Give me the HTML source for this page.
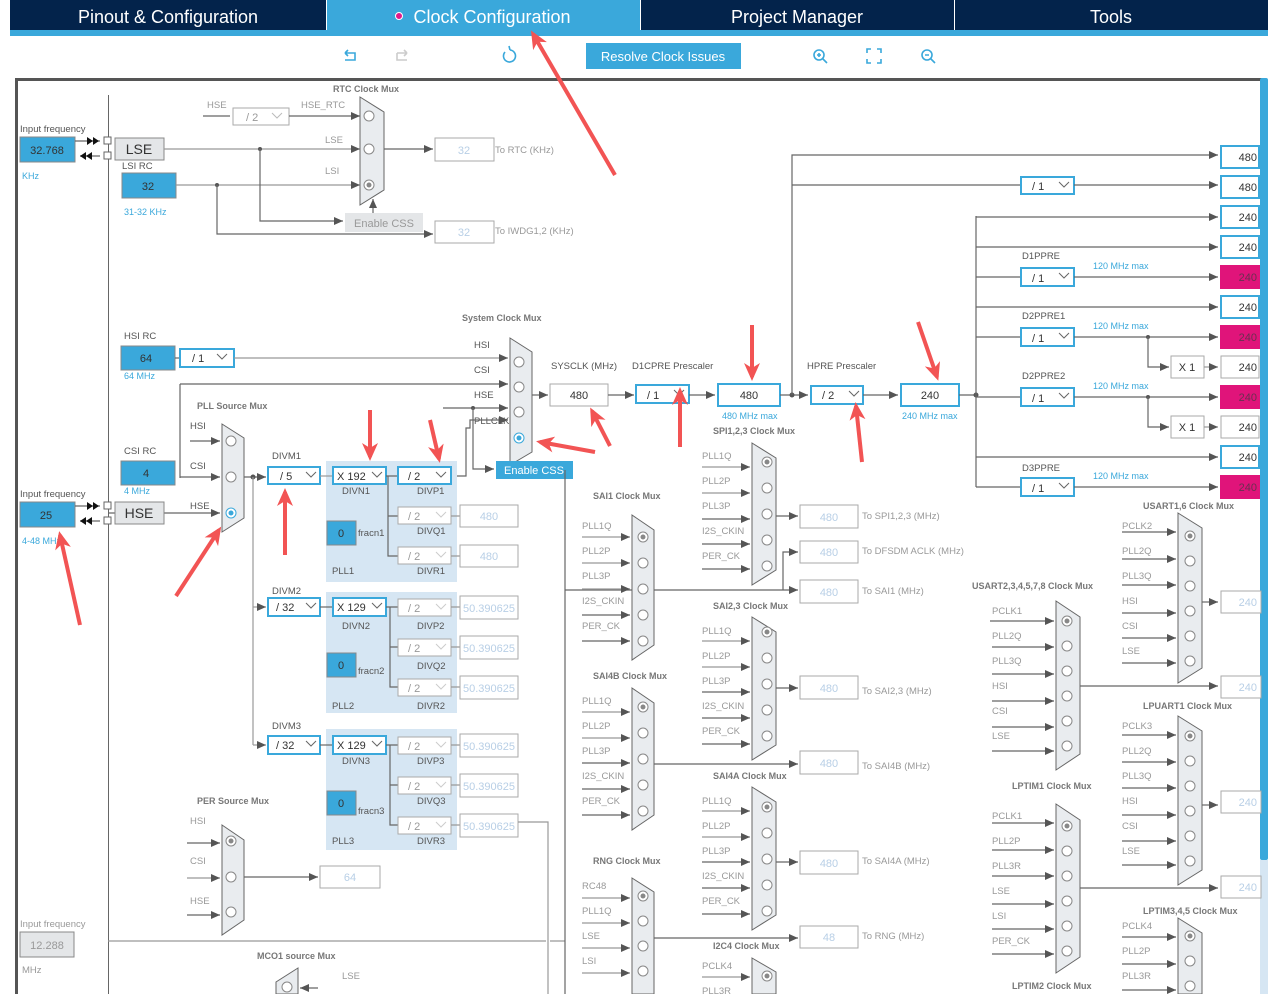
<!DOCTYPE html>
<html><head><meta charset="utf-8"><style>
body{margin:0;width:1270px;height:994px;overflow:hidden;background:#fff;font-family:"Liberation Sans",sans-serif}
svg{position:absolute;left:0;top:0}
.l{font-size:9.5px;fill:#555}
.g{font-size:9.5px;fill:#999}
.ti{font-size:9px;fill:#777;font-weight:bold}
.b{font-size:9px;fill:#3aa8db}
.ln{stroke:#666;fill:none;stroke-width:1.2}
.lg{stroke:#999;fill:none;stroke-width:1.2}
.dd{fill:#fff;stroke:#3aa8db;stroke-width:2}
.dx{fill:#fff;stroke:#aaa;stroke-width:1}
.ob{fill:#fff;stroke:#aaa;stroke-width:1}
.bb{fill:#3aa8db;stroke:#888;stroke-width:1}
.mx{fill:#e9ecef;stroke:#666;stroke-width:1}
.c{fill:#fff;stroke:#888;stroke-width:1}
.ra{stroke:#f25454;stroke-width:4;marker-end:url(#rh)}
.v{font-size:11px;fill:#333}
.vl{font-size:11px;fill:#b8cfe6}
.vd{font-size:11px;fill:#999}
.pk{font-size:11px;fill:#6a3050}
</style></head><body>
<svg width="1270" height="994" viewBox="0 0 1270 994">
<defs>
<marker id="a" markerWidth="9" markerHeight="8" refX="9" refY="4" orient="auto" markerUnits="userSpaceOnUse"><path d="M0,0L9,4L0,8z" fill="#555"/></marker>
<marker id="rh" markerWidth="24" markerHeight="24" refX="14" refY="8" orient="auto" markerUnits="userSpaceOnUse"><path d="M0,0L18,8L0,16L5,8z" fill="#f25454"/></marker>
</defs>
<rect x="10" y="0" width="1258" height="30" fill="#03234b"/>
<rect x="327" y="0" width="313" height="30" fill="#3aa8db"/>
<rect x="10" y="30" width="1258" height="6" fill="#3aa8db"/>
<line x1="326.5" y1="0" x2="326.5" y2="30" stroke="#fff"/>
<line x1="640.5" y1="0" x2="640.5" y2="30" stroke="#fff"/>
<line x1="954.5" y1="0" x2="954.5" y2="30" stroke="#fff"/>
<g font-size="18" fill="#fff" text-anchor="middle"><text x="168" y="23">Pinout &amp; Configuration</text><text x="492" y="23">Clock Configuration</text><text x="797" y="23">Project Manager</text><text x="1111" y="23">Tools</text></g>
<circle cx="399" cy="16" r="3.5" fill="#e0198a" stroke="#fff" stroke-width="1"/>
<g stroke="#3aa8db" stroke-width="1.6" fill="none">
<path d="M345,53h10v7h-10M345,53l3-3M345,53l3,3"/>
<path d="M397,53h10M407,53l-3-3M407,53l-3,3M397,53v7h10" stroke="#ccc"/>
<path d="M505,52a6,6 0 1 0 5,-2M510,50l-1,-4"/>
<circle cx="819" cy="55" r="5"/><path d="M823,59l4,4M817,55h4M819,53v4"/>
<path d="M867,53v-4h4M877,49h4v4M881,59v4h-4M871,63h-4v-4"/>
<circle cx="927" cy="55" r="5"/><path d="M931,59l4,4M925,55h4"/>
</g>
<rect x="586" y="43" width="155" height="26" fill="#3aa8db"/>
<text x="663" y="61" text-anchor="middle" font-size="13" fill="#fff">Resolve Clock Issues</text>
<path d="M16.5,994V79.5H1262" stroke="#555" stroke-width="3" fill="none"/>
<rect x="1260" y="78" width="8" height="782" fill="#3aa8db" rx="2"/>
<rect x="1260" y="860" width="8" height="134" fill="#d6e6f3"/>
<line x1="108.5" y1="95" x2="108.5" y2="994" stroke="#666"/>

<text class="l" x="20" y="132">Input frequency</text>
<rect class="bb" x="20" y="137" width="55" height="25"/><text class="v" x="47" y="154" text-anchor="middle">32.768</text>
<text class="b" x="22" y="179">KHz</text>
<path d="M75,141H100M100,156H80" class="ln"/><path d="M93,137l6,4l-6,4zM87,137l6,4l-6,4zM80,156l6,-4v8zM86,156l6,-4v8z" fill="#111"/>
<rect x="104" y="137" width="7" height="7" fill="#fff" stroke="#666"/><rect x="104" y="152" width="7" height="7" fill="#fff" stroke="#666"/>
<rect x="115" y="138" width="49" height="22" fill="#e4e6e8" stroke="#888"/><text x="139" y="154" text-anchor="middle" font-size="14" fill="#333">LSE</text>
<text class="l" x="122" y="169">LSI RC</text>
<rect class="bb" x="122" y="173" width="54" height="25"/><text class="v" x="148" y="190" text-anchor="middle">32</text>
<text class="b" x="124" y="215">31-32 KHz</text>
<text class="ti" x="333" y="92">RTC Clock Mux</text>
<text class="g" x="207" y="108">HSE</text><line x1="203" y1="116" x2="230" y2="116" class="ln"/>
<rect class="dx" x="233" y="108" width="56" height="17"/><text class="vd" x="246" y="121">/ 2</text><polyline points="272,113 277,118 282,113" fill="none" stroke="#bbb"/>
<text class="g" x="301" y="108">HSE_RTC</text>
<line x1="289" y1="116" x2="360" y2="116" class="ln" marker-end="url(#a)"/>
<path d="M164,149H360" class="lg" marker-end="url(#a)"/><path d="M176,185H360" class="lg" marker-end="url(#a)"/>
<text class="g" x="325" y="143">LSE</text><text class="g" x="325" y="174">LSI</text>
<circle cx="260" cy="149" r="2" fill="#555"/><circle cx="217" cy="185" r="2" fill="#555"/>
<path d="M260,149V221H343" class="ln" marker-end="url(#a)"/>
<path d="M217,185V234H433" class="ln" marker-end="url(#a)"/>
<polygon class="mx" points="360,97 384,112 384,190 360,205"/>
<circle class="c" cx="369" cy="116" r="5"/><circle class="c" cx="369" cy="149" r="5"/><circle class="c" cx="369" cy="185" r="5"/><circle cx="369" cy="185" r="2.5" fill="#888"/>
<rect x="345" y="213" width="78" height="19" fill="#e4e6e8"/><text x="384" y="227" text-anchor="middle" font-size="11" fill="#999">Enable CSS</text>
<line x1="373" y1="213" x2="373" y2="199" class="ln" marker-end="url(#a)"/>
<line x1="384" y1="149" x2="433" y2="149" class="ln" marker-end="url(#a)"/>
<rect class="ob" x="435" y="138" width="59" height="23"/><text class="vl" x="464" y="154" text-anchor="middle">32</text><text class="g" x="495" y="153">To RTC (KHz)</text>
<rect class="ob" x="435" y="221" width="59" height="22"/><text class="vl" x="464" y="236" text-anchor="middle">32</text><text class="g" x="495" y="234">To IWDG1,2 (KHz)</text>

<text class="l" x="124" y="339">HSI RC</text>
<rect class="bb" x="121" y="346" width="54" height="24"/><text class="v" x="146" y="362" text-anchor="middle">64</text>
<text class="b" x="124" y="379">64 MHz</text>
<line x1="175" y1="358" x2="180" y2="358" class="ln"/>
<rect class="dd" x="180" y="349" width="54" height="18"/><text class="v" x="192" y="362">/ 1</text><polyline points="217,354 222,359 227,354" fill="none" stroke="#666"/>
<line x1="234" y1="358" x2="508" y2="358" class="lg" marker-end="url(#a)"/>
<path d="M180,384H508" class="ln" marker-end="url(#a)"/>
<path d="M180,384V478" class="ln"/>
<text class="l" x="474" y="348">HSI</text><text class="l" x="474" y="373">CSI</text><text class="l" x="474" y="398">HSE</text><text class="l" x="474" y="424">PLLCLK</text>
<text class="l" x="124" y="454">CSI RC</text>
<rect class="bb" x="121" y="461" width="54" height="24"/><text class="v" x="146" y="477" text-anchor="middle">4</text>
<text class="b" x="124" y="494">4 MHz</text>
<line x1="443" y1="408" x2="508" y2="408" class="ln" marker-end="url(#a)"/><circle cx="473" cy="408" r="2" fill="#555"/>
<path d="M473,408V469H494" class="ln" marker-end="url(#a)"/>
<path d="M455,476H466V428H470V420H508" class="ln" marker-end="url(#a)"/>
<text class="ti" x="462" y="321">System Clock Mux</text>
<polygon class="mx" points="510,338 532,352 532,452 510,465"/>
<circle class="c" cx="519" cy="362" r="5"/><circle class="c" cx="519" cy="387" r="5"/><circle class="c" cx="519" cy="412" r="5"/><circle cx="519" cy="438" r="5" fill="#fff" stroke="#3aa8db"/><circle cx="519" cy="438" r="2.5" fill="#3aa8db"/>
<line x1="519" y1="475" x2="519" y2="466" class="ln" marker-end="url(#a)"/>
<rect x="496" y="461" width="77" height="18" fill="#3aa8db"/><text x="534" y="474" text-anchor="middle" font-size="11" fill="#fff">Enable CSS</text>
<line x1="532" y1="395" x2="548" y2="395" class="ln" marker-end="url(#a)"/>
<text class="l" x="551" y="369">SYSCLK (MHz)</text>
<rect class="ob" x="550" y="384" width="58" height="22" stroke="#888"/><text class="v" x="579" y="399" text-anchor="middle">480</text>
<line x1="608" y1="395" x2="634" y2="395" class="ln" marker-end="url(#a)"/>
<text class="l" x="632" y="369">D1CPRE Prescaler</text>
<rect class="dd" x="636" y="385" width="53" height="18"/><text class="v" x="647" y="399">/ 1</text><polyline points="674,390 679,395 684,390" fill="none" stroke="#666"/>
<line x1="689" y1="395" x2="715" y2="395" class="ln" marker-end="url(#a)"/>
<rect class="dd" x="718" y="384" width="62" height="22"/><text class="v" x="749" y="399" text-anchor="middle">480</text>
<text class="b" x="722" y="419">480 MHz max</text>
<line x1="780" y1="395" x2="808" y2="395" class="ln" marker-end="url(#a)"/><circle cx="792" cy="395" r="2.5" fill="#555"/>
<path d="M792,395V155H1218" class="ln" marker-end="url(#a)"/>
<path d="M792,185H1020" class="ln"/>
<text class="l" x="807" y="369">HPRE Prescaler</text>
<rect class="dd" x="811" y="386" width="52" height="18"/><text class="v" x="822" y="399">/ 2</text><polyline points="849,391 854,396 859,391" fill="none" stroke="#666"/>
<line x1="863" y1="395" x2="898" y2="395" class="ln" marker-end="url(#a)"/>
<rect class="dd" x="901" y="384" width="58" height="22"/><text class="v" x="930" y="399" text-anchor="middle">240</text>
<text class="b" x="902" y="419">240 MHz max</text>
<line x1="959" y1="395" x2="976" y2="395" class="ln"/><circle cx="976" cy="395" r="2.5" fill="#555"/>
<path d="M976,216V487" class="ln"/>
<g>
<rect class="dd" x="1021" y="177" width="53" height="17"/><text class="v" x="1032" y="190">/ 1</text><polyline points="1059,182 1064,187 1069,182" fill="none" stroke="#666"/>
<path d="M1074,185H1218" class="ln" marker-end="url(#a)"/>
<path d="M976,217H1218" class="ln" marker-end="url(#a)"/><path d="M976,247H1218" class="ln" marker-end="url(#a)"/><path d="M976,307H1218" class="ln" marker-end="url(#a)"/><path d="M976,457H1218" class="ln" marker-end="url(#a)"/>
<path d="M976,277H1021M976,337H1021M976,397H1021M976,487H1021" class="ln"/>
<text class="l" x="1022" y="259">D1PPRE</text><text class="l" x="1022" y="319">D2PPRE1</text><text class="l" x="1022" y="379">D2PPRE2</text><text class="l" x="1022" y="471">D3PPRE</text>
<text class="b" x="1093" y="269">120 MHz max</text><text class="b" x="1093" y="329">120 MHz max</text><text class="b" x="1093" y="389">120 MHz max</text><text class="b" x="1093" y="479">120 MHz max</text>
<rect class="dd" x="1021" y="268" width="53" height="18"/><text class="v" x="1032" y="282">/ 1</text><polyline points="1059,273 1064,278 1069,273" fill="none" stroke="#666"/>
<rect class="dd" x="1021" y="328" width="53" height="18"/><text class="v" x="1032" y="342">/ 1</text><polyline points="1059,333 1064,338 1069,333" fill="none" stroke="#666"/>
<rect class="dd" x="1021" y="388" width="53" height="18"/><text class="v" x="1032" y="402">/ 1</text><polyline points="1059,393 1064,398 1069,393" fill="none" stroke="#666"/>
<rect class="dd" x="1021" y="478" width="53" height="18"/><text class="v" x="1032" y="492">/ 1</text><polyline points="1059,483 1064,488 1069,483" fill="none" stroke="#666"/>
<path d="M1074,277H1218" class="ln" marker-end="url(#a)"/><path d="M1074,337H1218" class="ln" marker-end="url(#a)"/><path d="M1074,397H1218" class="ln" marker-end="url(#a)"/><path d="M1074,487H1218" class="ln" marker-end="url(#a)"/>
<circle cx="1148" cy="337" r="2" fill="#555"/><circle cx="1148" cy="397" r="2" fill="#555"/>
<path d="M1148,337V367H1169" class="ln" marker-end="url(#a)"/><path d="M1148,397V427H1169" class="ln" marker-end="url(#a)"/>
<rect class="ob" x="1171" y="356" width="33" height="22" stroke="#888"/><text class="v" x="1187" y="371" text-anchor="middle">X 1</text>
<rect class="ob" x="1171" y="416" width="33" height="22" stroke="#888"/><text class="v" x="1187" y="431" text-anchor="middle">X 1</text>
<path d="M1204,367H1218" class="lg" marker-end="url(#a)"/><path d="M1204,427H1218" class="lg" marker-end="url(#a)"/>
<g class="dd"><rect x="1221" y="146" width="38" height="22"/><rect x="1221" y="176" width="38" height="22"/><rect x="1221" y="206" width="38" height="22"/><rect x="1221" y="236" width="38" height="22"/><rect x="1221" y="296" width="38" height="22"/><rect x="1221" y="446" width="38" height="22"/></g>
<g fill="#e0147a"><rect x="1220" y="265" width="40" height="24"/><rect x="1220" y="325" width="40" height="24"/><rect x="1220" y="385" width="40" height="24"/><rect x="1220" y="475" width="40" height="24"/></g>
<rect class="ob" x="1221" y="356" width="38" height="22" stroke="#888"/><rect class="ob" x="1221" y="416" width="38" height="22" stroke="#888"/>
<g class="v" text-anchor="end"><text x="1257" y="161">480</text><text x="1257" y="191">480</text><text x="1257" y="221">240</text><text x="1257" y="251">240</text><text x="1257" y="311">240</text><text x="1257" y="371">240</text><text x="1257" y="431">240</text><text x="1257" y="461">240</text></g>
<g class="pk" text-anchor="end"><text x="1257" y="281">240</text><text x="1257" y="341">240</text><text x="1257" y="401">240</text><text x="1257" y="491">240</text></g>
</g>

<text class="ti" x="197" y="409">PLL Source Mux</text>
<text class="l" x="190" y="429">HSI</text><text class="l" x="190" y="469">CSI</text><text class="l" x="190" y="509">HSE</text>
<path d="M190,441H220" class="ln" marker-end="url(#a)"/><path d="M180,477H220" class="ln" marker-end="url(#a)"/><path d="M180,513H220" class="ln" marker-end="url(#a)"/>
<path d="M108,513H180" class="ln"/>
<polygon class="mx" points="222,424 244,438 244,518 222,532"/>
<circle class="c" cx="231" cy="441" r="5"/><circle class="c" cx="231" cy="477" r="5"/><circle cx="231" cy="513" r="5" fill="#fff" stroke="#3aa8db"/><circle cx="231" cy="513" r="2.5" fill="#3aa8db"/>
<path d="M244,477H266" class="ln" marker-end="url(#a)"/><circle cx="253" cy="477" r="2.5" fill="#555"/>
<path d="M253,477V745" class="lg"/>
<path d="M253,607H266" class="lg" marker-end="url(#a)"/><path d="M253,745H266" class="lg" marker-end="url(#a)"/>
<text class="l" x="20" y="497">Input frequency</text>
<rect class="bb" x="20" y="502" width="55" height="25"/><text class="v" x="46" y="519" text-anchor="middle">25</text>
<text class="b" x="22" y="544">4-48 MHz</text>
<path d="M75,506H100M100,521H80" class="ln"/><path d="M93,502l6,4l-6,4zM87,502l6,4l-6,4zM80,521l6,-4v8zM86,521l6,-4v8z" fill="#111"/>
<rect x="104" y="502" width="7" height="7" fill="#fff" stroke="#666"/><rect x="104" y="517" width="7" height="7" fill="#fff" stroke="#666"/>
<rect x="115" y="502" width="49" height="22" fill="#e4e6e8" stroke="#888"/><text x="139" y="518" text-anchor="middle" font-size="14" fill="#333">HSE</text>

<g fill="#d6e6f3"><rect x="326" y="461" width="131" height="121"/><rect x="326" y="592" width="131" height="121"/><rect x="326" y="729" width="131" height="121"/></g>
<text class="l" x="272" y="459">DIVM1</text>
<rect class="dd" x="268" y="467" width="52" height="17"/><text class="v" x="280" y="480">/ 5</text><polyline points="306,472 311,477 316,472" fill="none" stroke="#666"/>
<path d="M320,476H333" class="lg"/>
<rect class="dd" x="333" y="467" width="53" height="17"/><text class="v" x="337" y="480">X 192</text><polyline points="372,472 377,477 382,472" fill="none" stroke="#666"/>
<text class="l" x="342" y="494">DIVN1</text>
<path d="M386,476H398M388,476V556H398M388,516H398" class="ln"/>
<rect class="dd" x="398" y="467" width="53" height="17"/><text class="v" x="408" y="480">/ 2</text><polyline points="436,472 441,477 446,472" fill="none" stroke="#666"/>
<text class="l" x="417" y="494">DIVP1</text>
<rect class="dx" x="398" y="507" width="53" height="17"/><text class="vd" x="408" y="520">/ 2</text><polyline points="436,512 441,517 446,512" fill="none" stroke="#ccc"/>
<text class="l" x="417" y="534">DIVQ1</text>
<rect class="dx" x="398" y="547" width="53" height="17"/><text class="vd" x="408" y="560">/ 2</text><polyline points="436,552 441,557 446,552" fill="none" stroke="#ccc"/>
<text class="l" x="417" y="574">DIVR1</text>
<rect class="bb" x="327" y="521" width="29" height="24"/><text class="v" x="341" y="537" text-anchor="middle">0</text><text class="l" x="358" y="536">fracn1</text>
<text class="l" x="332" y="574">PLL1</text>
<path d="M451,516H460M451,556H460" class="lg"/>
<rect class="ob" x="460" y="505" width="58" height="22"/><text class="vl" x="489" y="520" text-anchor="middle">480</text>
<rect class="ob" x="460" y="545" width="58" height="22"/><text class="vl" x="489" y="560" text-anchor="middle">480</text>
<text class="l" x="272" y="594">DIVM2</text>
<rect class="dd" x="268" y="598" width="52" height="18"/><text class="v" x="276" y="611">/ 32</text><polyline points="306,603 311,608 316,603" fill="none" stroke="#666"/>
<path d="M320,607H333" class="ln"/>
<rect class="dd" x="333" y="598" width="53" height="18"/><text class="v" x="337" y="611">X 129</text><polyline points="372,603 377,608 382,603" fill="none" stroke="#666"/>
<text class="l" x="342" y="629">DIVN2</text>
<path d="M386,607H398M390,607V687H398M390,647H398" class="ln"/>
<rect class="dx" x="398" y="599" width="53" height="17"/><text class="vd" x="408" y="612">/ 2</text><polyline points="436,604 441,609 446,604" fill="none" stroke="#ccc"/>
<text class="l" x="417" y="629">DIVP2</text>
<rect class="dx" x="398" y="639" width="53" height="17"/><text class="vd" x="408" y="652">/ 2</text><polyline points="436,644 441,649 446,644" fill="none" stroke="#ccc"/>
<text class="l" x="417" y="669">DIVQ2</text>
<rect class="dx" x="398" y="679" width="53" height="17"/><text class="vd" x="408" y="692">/ 2</text><polyline points="436,684 441,689 446,684" fill="none" stroke="#ccc"/>
<text class="l" x="417" y="709">DIVR2</text>
<rect class="bb" x="327" y="653" width="29" height="24"/><text class="v" x="341" y="669" text-anchor="middle">0</text><text class="l" x="358" y="674">fracn2</text>
<text class="l" x="332" y="709">PLL2</text>
<path d="M451,607H460M451,647H460M451,687H460" class="lg"/>
<rect class="ob" x="460" y="596" width="58" height="23"/><text class="vl" x="489" y="612" text-anchor="middle">50.390625</text>
<rect class="ob" x="460" y="636" width="58" height="23"/><text class="vl" x="489" y="652" text-anchor="middle">50.390625</text>
<rect class="ob" x="460" y="676" width="58" height="23"/><text class="vl" x="489" y="692" text-anchor="middle">50.390625</text>
<text class="l" x="272" y="729">DIVM3</text>
<rect class="dd" x="268" y="736" width="52" height="18"/><text class="v" x="276" y="749">/ 32</text><polyline points="306,741 311,746 316,741" fill="none" stroke="#666"/>
<path d="M320,745H333" class="ln"/>
<rect class="dd" x="333" y="736" width="53" height="18"/><text class="v" x="337" y="749">X 129</text><polyline points="372,741 377,746 382,741" fill="none" stroke="#666"/>
<text class="l" x="342" y="764">DIVN3</text>
<path d="M386,745H398M390,745V825H398M390,785H398" class="ln"/>
<rect class="dx" x="398" y="737" width="53" height="17"/><text class="vd" x="408" y="750">/ 2</text><polyline points="436,742 441,747 446,742" fill="none" stroke="#ccc"/>
<text class="l" x="417" y="764">DIVP3</text>
<rect class="dx" x="398" y="777" width="53" height="17"/><text class="vd" x="408" y="790">/ 2</text><polyline points="436,782 441,787 446,782" fill="none" stroke="#ccc"/>
<text class="l" x="417" y="804">DIVQ3</text>
<rect class="dx" x="398" y="817" width="53" height="17"/><text class="vd" x="408" y="830">/ 2</text><polyline points="436,822 441,827 446,822" fill="none" stroke="#ccc"/>
<text class="l" x="417" y="844">DIVR3</text>
<rect class="bb" x="327" y="791" width="29" height="24"/><text class="v" x="341" y="807" text-anchor="middle">0</text><text class="l" x="358" y="814">fracn3</text>
<text class="l" x="332" y="844">PLL3</text>
<path d="M451,745H460M451,785H460M451,825H460" class="lg"/>
<rect class="ob" x="460" y="734" width="58" height="23"/><text class="vl" x="489" y="750" text-anchor="middle">50.390625</text>
<rect class="ob" x="460" y="774" width="58" height="23"/><text class="vl" x="489" y="790" text-anchor="middle">50.390625</text>
<rect class="ob" x="460" y="814" width="58" height="23"/><text class="vl" x="489" y="830" text-anchor="middle">50.390625</text>
<path d="M518,822H548V994" class="lg"/>
<text class="ti" x="197" y="804">PER Source Mux</text>
<text class="g" x="190" y="824">HSI</text><text class="g" x="190" y="864">CSI</text><text class="g" x="190" y="904">HSE</text>
<path d="M187,843H220" class="ln" marker-end="url(#a)"/><path d="M187,878H220" class="lg" marker-end="url(#a)"/><path d="M187,915H220" class="ln" marker-end="url(#a)"/>
<polygon class="mx" points="222,825 244,840 244,920 222,935"/>
<circle class="c" cx="231" cy="841" r="5"/><circle cx="231" cy="841" r="2.5" fill="#888"/><circle class="c" cx="231" cy="877" r="5"/><circle class="c" cx="231" cy="912" r="5"/>
<path d="M244,877H318" class="ln" marker-end="url(#a)"/>
<rect class="ob" x="320" y="866" width="60" height="22"/><text class="vl" x="350" y="881" text-anchor="middle">64</text>
<text class="g" x="20" y="927">Input frequency</text>
<rect x="20" y="932" width="54" height="25" fill="#e4e6e8" stroke="#888"/><text class="vd" x="47" y="949" text-anchor="middle">12.288</text>
<text class="g" x="22" y="973">MHz</text>
<path d="M108,941H546M550,941H565" class="lg"/>
<text class="ti" x="257" y="959">MCO1 source Mux</text>
<text class="g" x="342" y="979">LSE</text>
<path d="M318,988H300" class="ln" marker-end="url(#a)"/>
<polygon class="mx" points="276,994 276,982 298,968 298,994"/><circle class="c" cx="287" cy="987" r="5"/>
<path d="M565,470V994" class="ln"/>
<path d="M565,590H654" class="ln"/>

<g>
<text class="ti" x="593" y="499">SAI1 Clock Mux</text>
<polygon class="mx" points="632,515 654,530 654,645 632,660"/>
<g class="g"><text x="582" y="529">PLL1Q</text><text x="582" y="554">PLL2P</text><text x="582" y="579">PLL3P</text><text x="582" y="604">I2S_CKIN</text><text x="582" y="629">PER_CK</text></g>
<path d="M582,537H630" class="lg" marker-end="url(#a)"/><path d="M582,563H630" class="lg" marker-end="url(#a)"/><path d="M582,589H630" class="lg" marker-end="url(#a)"/><path d="M582,615H630" class="ln" marker-end="url(#a)"/><path d="M582,641H630" class="ln" marker-end="url(#a)"/>
<circle class="c" cx="643" cy="537" r="5"/><circle cx="643" cy="537" r="2.5" fill="#888"/><circle class="c" cx="643" cy="563" r="5"/><circle class="c" cx="643" cy="589" r="5"/><circle class="c" cx="643" cy="615" r="5"/><circle class="c" cx="643" cy="641" r="5"/>
<path d="M654,590H798" class="ln" marker-end="url(#a)"/>
<path d="M783,590V552H798" class="ln" marker-end="url(#a)"/>
<text class="ti" x="713" y="434">SPI1,2,3 Clock Mux</text>
<polygon class="mx" points="752,443 776,458 776,570 752,585"/>
<g class="g"><text x="702" y="459">PLL1Q</text><text x="702" y="484">PLL2P</text><text x="702" y="509">PLL3P</text><text x="702" y="534">I2S_CKIN</text><text x="702" y="559">PER_CK</text></g>
<path d="M702,467H750" class="lg" marker-end="url(#a)"/><path d="M702,493H750" class="lg" marker-end="url(#a)"/><path d="M702,519H750" class="ln" marker-end="url(#a)"/><path d="M702,544H750" class="ln" marker-end="url(#a)"/><path d="M702,569H750" class="ln" marker-end="url(#a)"/>
<circle class="c" cx="767" cy="462" r="5"/><circle cx="767" cy="462" r="2.5" fill="#888"/><circle class="c" cx="767" cy="488" r="5"/><circle class="c" cx="767" cy="514" r="5"/><circle class="c" cx="767" cy="540" r="5"/><circle class="c" cx="767" cy="566" r="5"/>
<path d="M776,516H798" class="ln" marker-end="url(#a)"/>
<rect class="ob" x="800" y="505" width="58" height="23"/><text class="vl" x="829" y="521" text-anchor="middle">480</text><text class="g" x="862" y="519">To SPI1,2,3 (MHz)</text>
<rect class="ob" x="800" y="541" width="58" height="22"/><text class="vl" x="829" y="556" text-anchor="middle">480</text><text class="g" x="862" y="554">To DFSDM ACLK (MHz)</text>
<rect class="ob" x="800" y="580" width="58" height="23"/><text class="vl" x="829" y="596" text-anchor="middle">480</text><text class="g" x="862" y="594">To SAI1 (MHz)</text>
<text class="ti" x="713" y="609">SAI2,3 Clock Mux</text>
<polygon class="mx" points="752,617 776,632 776,745 752,760"/>
<g class="g"><text x="702" y="634">PLL1Q</text><text x="702" y="659">PLL2P</text><text x="702" y="684">PLL3P</text><text x="702" y="709">I2S_CKIN</text><text x="702" y="734">PER_CK</text></g>
<path d="M702,641H750" class="lg" marker-end="url(#a)"/><path d="M702,667H750" class="lg" marker-end="url(#a)"/><path d="M702,692H750" class="ln" marker-end="url(#a)"/><path d="M702,718H750" class="ln" marker-end="url(#a)"/><path d="M702,744H750" class="ln" marker-end="url(#a)"/>
<circle class="c" cx="767" cy="632" r="5"/><circle cx="767" cy="632" r="2.5" fill="#888"/><circle class="c" cx="767" cy="658" r="5"/><circle class="c" cx="767" cy="684" r="5"/><circle class="c" cx="767" cy="710" r="5"/><circle class="c" cx="767" cy="736" r="5"/>
<path d="M776,688H798" class="ln" marker-end="url(#a)"/>
<rect class="ob" x="800" y="676" width="58" height="23"/><text class="vl" x="829" y="692" text-anchor="middle">480</text><text class="g" x="862" y="694">To SAI2,3 (MHz)</text>
<text class="ti" x="593" y="679">SAI4B Clock Mux</text>
<polygon class="mx" points="632,688 654,703 654,815 632,830"/>
<g class="g"><text x="582" y="704">PLL1Q</text><text x="582" y="729">PLL2P</text><text x="582" y="754">PLL3P</text><text x="582" y="779">I2S_CKIN</text><text x="582" y="804">PER_CK</text></g>
<path d="M582,712H630" class="lg" marker-end="url(#a)"/><path d="M582,738H630" class="lg" marker-end="url(#a)"/><path d="M582,763H630" class="ln" marker-end="url(#a)"/><path d="M582,789H630" class="ln" marker-end="url(#a)"/><path d="M582,815H630" class="ln" marker-end="url(#a)"/>
<circle class="c" cx="643" cy="707" r="5"/><circle cx="643" cy="707" r="2.5" fill="#888"/><circle class="c" cx="643" cy="733" r="5"/><circle class="c" cx="643" cy="759" r="5"/><circle class="c" cx="643" cy="785" r="5"/><circle class="c" cx="643" cy="811" r="5"/>
<path d="M654,764H798" class="ln" marker-end="url(#a)"/>
<rect class="ob" x="800" y="751" width="58" height="23"/><text class="vl" x="829" y="767" text-anchor="middle">480</text><text class="g" x="862" y="769">To SAI4B (MHz)</text>
<text class="ti" x="713" y="779">SAI4A Clock Mux</text>
<polygon class="mx" points="752,787 776,802 776,915 752,930"/>
<g class="g"><text x="702" y="804">PLL1Q</text><text x="702" y="829">PLL2P</text><text x="702" y="854">PLL3P</text><text x="702" y="879">I2S_CKIN</text><text x="702" y="904">PER_CK</text></g>
<path d="M702,811H750" class="lg" marker-end="url(#a)"/><path d="M702,837H750" class="lg" marker-end="url(#a)"/><path d="M702,862H750" class="ln" marker-end="url(#a)"/><path d="M702,888H750" class="ln" marker-end="url(#a)"/><path d="M702,914H750" class="ln" marker-end="url(#a)"/>
<circle class="c" cx="767" cy="807" r="5"/><circle cx="767" cy="807" r="2.5" fill="#888"/><circle class="c" cx="767" cy="833" r="5"/><circle class="c" cx="767" cy="859" r="5"/><circle class="c" cx="767" cy="885" r="5"/><circle class="c" cx="767" cy="911" r="5"/>
<path d="M776,862H798" class="ln" marker-end="url(#a)"/>
<rect class="ob" x="800" y="851" width="58" height="23"/><text class="vl" x="829" y="867" text-anchor="middle">480</text><text class="g" x="862" y="864">To SAI4A (MHz)</text>
<text class="ti" x="593" y="864">RNG Clock Mux</text>
<polygon class="mx" points="632,878 654,892 654,994 632,994"/>
<g class="g"><text x="582" y="889">RC48</text><text x="582" y="914">PLL1Q</text><text x="582" y="939">LSE</text><text x="582" y="964">LSI</text></g>
<path d="M582,898H630" class="lg" marker-end="url(#a)"/><path d="M582,923H630" class="lg" marker-end="url(#a)"/><path d="M582,948H630" class="lg" marker-end="url(#a)"/><path d="M582,973H630" class="lg" marker-end="url(#a)"/>
<circle class="c" cx="643" cy="896" r="5"/><circle cx="643" cy="896" r="2.5" fill="#888"/><circle class="c" cx="643" cy="921" r="5"/><circle class="c" cx="643" cy="946" r="5"/><circle class="c" cx="643" cy="971" r="5"/>
<path d="M654,938H798" class="ln" marker-end="url(#a)"/>
<rect class="ob" x="800" y="926" width="58" height="22"/><text class="vl" x="829" y="941" text-anchor="middle">48</text><text class="g" x="862" y="939">To RNG (MHz)</text>
<text class="ti" x="713" y="949">I2C4 Clock Mux</text>
<polygon class="mx" points="752,958 776,972 776,994 752,994"/>
<g class="g"><text x="702" y="969">PCLK4</text><text x="702" y="994">PLL3R</text></g>
<path d="M702,977H750" class="lg" marker-end="url(#a)"/>
<circle class="c" cx="767" cy="976" r="5"/><circle cx="767" cy="976" r="2.5" fill="#888"/>
</g>

<g>
<text class="ti" x="1143" y="509">USART1,6 Clock Mux</text>
<polygon class="mx" points="1178,513 1202,528 1202,668 1178,683"/>
<g class="g"><text x="1122" y="529">PCLK2</text><text x="1122" y="554">PLL2Q</text><text x="1122" y="579">PLL3Q</text><text x="1122" y="604">HSI</text><text x="1122" y="629">CSI</text><text x="1122" y="654">LSE</text></g>
<path d="M1122,532H1176" class="ln" marker-end="url(#a)"/><path d="M1122,559H1176" class="ln" marker-end="url(#a)"/><path d="M1122,585H1176" class="ln" marker-end="url(#a)"/><path d="M1122,613H1176" class="ln" marker-end="url(#a)"/><path d="M1122,638H1176" class="ln" marker-end="url(#a)"/><path d="M1122,663H1176" class="ln" marker-end="url(#a)"/>
<circle class="c" cx="1190" cy="536" r="5"/><circle cx="1190" cy="536" r="2.5" fill="#888"/><circle class="c" cx="1190" cy="561" r="5"/><circle class="c" cx="1190" cy="586" r="5"/><circle class="c" cx="1190" cy="611" r="5"/><circle class="c" cx="1190" cy="636" r="5"/><circle class="c" cx="1190" cy="661" r="5"/>
<path d="M1202,602H1218" class="ln" marker-end="url(#a)"/>
<rect class="ob" x="1221" y="591" width="40" height="22"/><text class="vl" x="1257" y="606" text-anchor="end">240</text>
<text class="ti" x="972" y="589">USART2,3,4,5,7,8 Clock Mux</text>
<polygon class="mx" points="1056,601 1080,617 1080,754 1056,770"/>
<g class="g"><text x="992" y="614">PCLK1</text><text x="992" y="639">PLL2Q</text><text x="992" y="664">PLL3Q</text><text x="992" y="689">HSI</text><text x="992" y="714">CSI</text><text x="992" y="739">LSE</text></g>
<path d="M990,621H1054" class="ln" marker-end="url(#a)"/><path d="M992,647H1054" class="ln" marker-end="url(#a)"/><path d="M992,674H1054" class="ln" marker-end="url(#a)"/><path d="M992,701H1054" class="ln" marker-end="url(#a)"/><path d="M992,727H1054" class="ln" marker-end="url(#a)"/><path d="M992,751H1054" class="ln" marker-end="url(#a)"/>
<circle class="c" cx="1067" cy="621" r="5"/><circle cx="1067" cy="621" r="2.5" fill="#888"/><circle class="c" cx="1067" cy="646" r="5"/><circle class="c" cx="1067" cy="671" r="5"/><circle class="c" cx="1067" cy="696" r="5"/><circle class="c" cx="1067" cy="721" r="5"/><circle class="c" cx="1067" cy="746" r="5"/>
<path d="M1080,686H1218" class="ln" marker-end="url(#a)"/>
<rect class="ob" x="1221" y="676" width="40" height="22"/><text class="vl" x="1257" y="691" text-anchor="end">240</text>
<text class="ti" x="1143" y="709">LPUART1 Clock Mux</text>
<polygon class="mx" points="1178,716 1202,731 1202,870 1178,885"/>
<g class="g"><text x="1122" y="729">PCLK3</text><text x="1122" y="754">PLL2Q</text><text x="1122" y="779">PLL3Q</text><text x="1122" y="804">HSI</text><text x="1122" y="829">CSI</text><text x="1122" y="854">LSE</text></g>
<path d="M1122,735H1176" class="ln" marker-end="url(#a)"/><path d="M1122,762H1176" class="ln" marker-end="url(#a)"/><path d="M1122,788H1176" class="ln" marker-end="url(#a)"/><path d="M1122,815H1176" class="ln" marker-end="url(#a)"/><path d="M1122,841H1176" class="ln" marker-end="url(#a)"/><path d="M1122,865H1176" class="ln" marker-end="url(#a)"/>
<circle class="c" cx="1190" cy="736" r="5"/><circle cx="1190" cy="736" r="2.5" fill="#888"/><circle class="c" cx="1190" cy="761" r="5"/><circle class="c" cx="1190" cy="786" r="5"/><circle class="c" cx="1190" cy="811" r="5"/><circle class="c" cx="1190" cy="836" r="5"/><circle class="c" cx="1190" cy="861" r="5"/>
<path d="M1202,805H1218" class="ln" marker-end="url(#a)"/>
<rect class="ob" x="1221" y="791" width="40" height="22"/><text class="vl" x="1257" y="806" text-anchor="end">240</text>
<text class="ti" x="1012" y="789">LPTIM1 Clock Mux</text>
<polygon class="mx" points="1056,804 1080,820 1080,957 1056,973"/>
<g class="g"><text x="992" y="819">PCLK1</text><text x="992" y="844">PLL2P</text><text x="992" y="869">PLL3R</text><text x="992" y="894">LSE</text><text x="992" y="919">LSI</text><text x="992" y="944">PER_CK</text></g>
<path d="M992,823H1054" class="ln" marker-end="url(#a)"/><path d="M992,850H1054" class="ln" marker-end="url(#a)"/><path d="M992,876H1054" class="ln" marker-end="url(#a)"/><path d="M992,904H1054" class="ln" marker-end="url(#a)"/><path d="M992,929H1054" class="ln" marker-end="url(#a)"/><path d="M992,954H1054" class="ln" marker-end="url(#a)"/>
<circle class="c" cx="1067" cy="826" r="5"/><circle cx="1067" cy="826" r="2.5" fill="#888"/><circle class="c" cx="1067" cy="851" r="5"/><circle class="c" cx="1067" cy="876" r="5"/><circle class="c" cx="1067" cy="901" r="5"/><circle class="c" cx="1067" cy="926" r="5"/><circle class="c" cx="1067" cy="951" r="5"/>
<path d="M1080,888H1218" class="ln" marker-end="url(#a)"/>
<rect class="ob" x="1221" y="876" width="40" height="22"/><text class="vl" x="1257" y="891" text-anchor="end">240</text>
<text class="ti" x="1012" y="989">LPTIM2 Clock Mux</text>
<text class="ti" x="1143" y="914">LPTIM3,4,5 Clock Mux</text>
<polygon class="mx" points="1178,918 1202,933 1202,994 1178,994"/>
<g class="g"><text x="1122" y="929">PCLK4</text><text x="1122" y="954">PLL2P</text><text x="1122" y="979">PLL3R</text></g>
<path d="M1122,937H1176" class="ln" marker-end="url(#a)"/><path d="M1122,964H1176" class="ln" marker-end="url(#a)"/><path d="M1122,990H1176" class="ln" marker-end="url(#a)"/>
<circle class="c" cx="1190" cy="936" r="5"/><circle cx="1190" cy="936" r="2.5" fill="#888"/><circle class="c" cx="1190" cy="961" r="5"/><circle class="c" cx="1190" cy="986" r="5"/>
</g>

<g>
<line class="ra" x1="615" y1="175" x2="533" y2="34"/>
<line class="ra" x1="80" y1="625" x2="60" y2="535"/>
<line class="ra" x1="176" y1="596" x2="219" y2="530"/>
<line class="ra" x1="285" y1="555" x2="285" y2="492"/>
<line class="ra" x1="370" y1="410" x2="370" y2="457"/>
<line class="ra" x1="430" y1="420" x2="439" y2="459"/>
<line class="ra" x1="595" y1="452" x2="540" y2="442"/>
<line class="ra" x1="610" y1="446" x2="592" y2="411"/>
<line class="ra" x1="680" y1="447" x2="680" y2="391"/>
<line class="ra" x1="752" y1="325" x2="752" y2="377"/>
<line class="ra" x1="862" y1="462" x2="856" y2="406"/>
<line class="ra" x1="918" y1="322" x2="937" y2="377"/>
</g>
</svg>
</body></html>
